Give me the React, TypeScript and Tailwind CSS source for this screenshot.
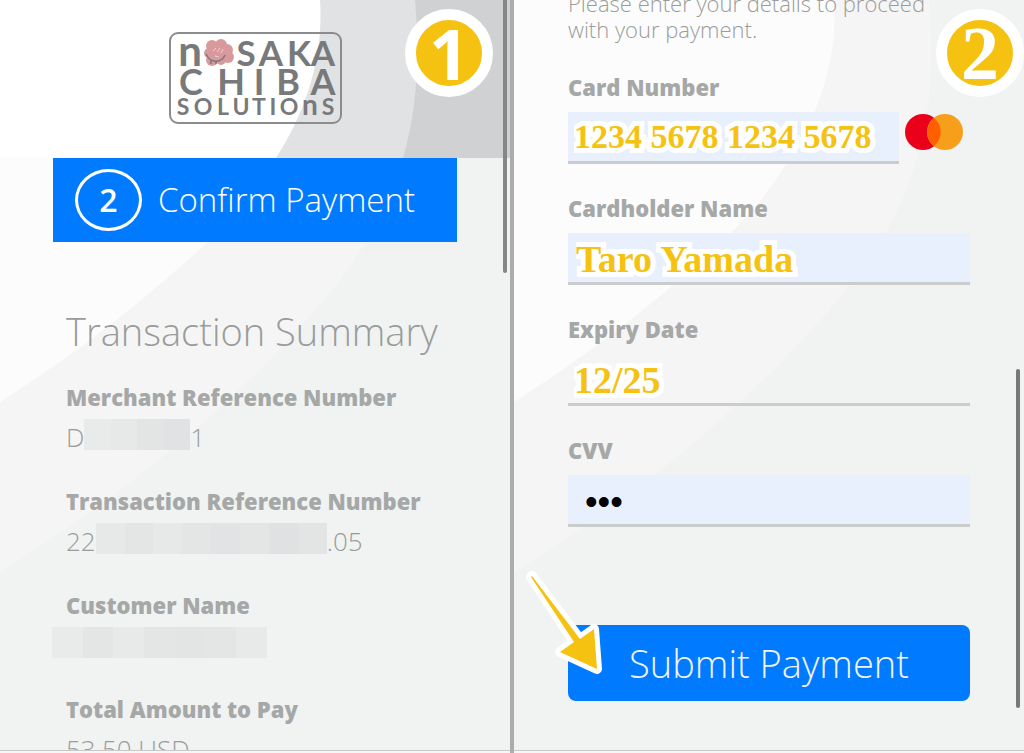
import React from "react";

const YELLOW_TEXT =
  "text-[#f5c211] [-webkit-text-stroke:10px_white] [paint-order:stroke_fill] [stroke-linejoin:round]";

const LOGO_LETTERS = [
  { char: "n", x: 190, y: 66, size: 42 },
  { char: "S", x: 246, y: 66, size: 35 },
  { char: "A", x: 271, y: 66, size: 35 },
  { char: "K", x: 299, y: 66, size: 35 },
  { char: "A", x: 323, y: 66, size: 35 },
  { char: "C", x: 191, y: 95, size: 36 },
  { char: "H", x: 231, y: 95, size: 36 },
  { char: "I", x: 259, y: 95, size: 36 },
  { char: "B", x: 288, y: 95, size: 36 },
  { char: "A", x: 323, y: 95, size: 36 },
  { char: "S", x: 183, y: 115, size: 23 },
  { char: "O", x: 203, y: 115, size: 23 },
  { char: "L", x: 223, y: 115, size: 23 },
  { char: "U", x: 241, y: 115, size: 23 },
  { char: "T", x: 259, y: 115, size: 23 },
  { char: "I", x: 273, y: 115, size: 23 },
  { char: "O", x: 289, y: 115, size: 23 },
  { char: "n", x: 310, y: 115, size: 28 },
  { char: "S", x: 328, y: 115, size: 23 },
];

const Curves: React.FC<{ outer: string; inner: string }> = ({ outer, inner }) => (
  <svg
    className="absolute left-0 top-0 -z-10"
    width="510"
    height="600"
    viewBox="0 0 510 600"
    aria-hidden="true"
  >
    <path
      fill={outer}
      d="M0 0H415C420 60 417 110 403 158C390 205 365 250 332 290C250 390 140 485 0 572Z"
    />
    <path
      fill={inner}
      d="M0 0H320C324 60 304 115 276 158C250 200 225 228 190 258C130 312 70 357 0 402Z"
    />
  </svg>
);

const StepBadge: React.FC<{ children: React.ReactNode; className: string }> = ({
  children,
  className,
}) => (
  <div
    className={`absolute top-[9px] flex size-[88px] items-center justify-center rounded-full border-[11px] border-white bg-[#f5c211] font-bold leading-none text-white ${className}`}
  >
    {children}
  </div>
);

const Logo: React.FC = () => (
  <svg width="174" height="93" viewBox="168 32 174 93" role="img" aria-label="Nosaka Chiba Solutions">
    <rect x="170" y="33" width="171" height="90" rx="8" fill="none" stroke="#8b8c8e" strokeWidth="2" />
    <g fill="#77797b" fontFamily="Lato, sans-serif" fontWeight="700" textAnchor="middle">
      {LOGO_LETTERS.map((l) => (
        <text key={`${l.x}-${l.y}`} x={l.x} y={l.y} fontSize={l.size}>
          {l.char}
        </text>
      ))}
    </g>
    <g fill="#d99a9e">
      <circle cx="212" cy="46" r="6" />
      <circle cx="221" cy="45" r="6" />
      <circle cx="227" cy="50" r="6" />
      <circle cx="228" cy="57" r="6" />
      <circle cx="221" cy="60" r="5" />
      <circle cx="212" cy="60" r="6" />
      <circle cx="209" cy="53" r="5" />
      <circle cx="218" cy="53" r="9" />
    </g>
    <path
      d="M206 54c4 9 15 10 19 1M211 60v4M216 61v3"
      fill="none"
      stroke="#77797b"
      strokeWidth="1.5"
    />
    <path
      d="M213 51l3-3M217 52l3-4M221 53l2-4M215 56l4 1"
      fill="none"
      stroke="#ecd3d5"
      strokeWidth="1"
    />
  </svg>
);

const Mosaic: React.FC<{ tiles: string[]; className: string }> = ({ tiles, className }) => (
  <span className={`flex h-[31px] ${className}`}>
    {tiles.map((tile, i) => (
      <span key={i} className={`flex-1 ${tile}`} />
    ))}
  </span>
);

const SummaryItem: React.FC<{ label: string; children: React.ReactNode }> = ({
  label,
  children,
}) => (
  <div className="h-[104px] shrink-0">
    <dt className="text-[22px] font-extrabold leading-[28px]">{label}</dt>
    <dd className="mt-2 flex h-[31px] text-[26px] font-light leading-[36px] text-[#999c9b]">
      {children}
    </dd>
  </div>
);

const Summary: React.FC = () => (
  <section className="relative isolate flex min-w-0 flex-col overflow-hidden bg-[#f0f3f2]">
    <Curves outer="#f5f5f5" inner="#fcfcfc" />
    <header className="relative isolate flex h-[158px] shrink-0 justify-center overflow-hidden bg-[#d0d1d3] pt-8">
      <Curves outer="#e1e2e4" inner="#ffffff" />
      <Logo />
    </header>
    <div className="mx-[53px] flex h-[84px] shrink-0 items-center gap-4 bg-[#007bff] pl-[22px] text-white">
      <span className="flex h-[62px] w-[67px] items-center justify-center rounded-[50%] border-[3px] border-white text-[32px] font-semibold">
        2
      </span>
      <span className="whitespace-nowrap text-[33px] font-light">Confirm Payment</span>
    </div>
    <div className="px-[66px] pt-[65px]">
      <h1 className="whitespace-nowrap text-[38px] font-light leading-[48px] text-[#999c9b]">
        Transaction Summary
      </h1>
      <dl className="mt-7 whitespace-nowrap">
        <SummaryItem label="Merchant Reference Number">
          D
          <Mosaic
            className="w-[106px]"
            tiles={["bg-[#e9ebea]", "bg-[#e7e9e8]", "bg-[#e3e4e4]", "bg-[#e1e2e3]"]}
          />
          1
        </SummaryItem>
        <SummaryItem label="Transaction Reference Number">
          22
          <Mosaic
            className="w-[231px]"
            tiles={[
              "bg-[#e7e9e8]",
              "bg-[#e4e6e5]",
              "bg-[#e7e9e8]",
              "bg-[#e4e5e5]",
              "bg-[#e2e3e4]",
              "bg-[#e4e5e5]",
              "bg-[#e0e1e3]",
              "bg-[#e3e4e4]",
            ]}
          />
          .05
        </SummaryItem>
        <SummaryItem label="Customer Name">
          <Mosaic
            className="-ml-[14px] w-[215px]"
            tiles={[
              "bg-[#e9ebea]",
              "bg-[#e4e6e5]",
              "bg-[#e8eae9]",
              "bg-[#e4e6e5]",
              "bg-[#e3e5e4]",
              "bg-[#e4e6e5]",
              "bg-[#e8eae9]",
            ]}
          />
        </SummaryItem>
        <SummaryItem label="Total Amount to Pay">53.50 USD</SummaryItem>
      </dl>
    </div>
    <div className="absolute inset-x-0 bottom-0 h-[3px] border-t border-[#c9c9c9] bg-[#f6f6f6]" />
    <div className="absolute right-[3px] top-0 h-[273px] w-1 rounded-b-full bg-[#858687]" />
    <StepBadge className="right-[17px] font-['Open_Sans',sans-serif] text-[70px]">1</StepBadge>
  </section>
);

type FieldProps = {
  id: string;
  label: string;
  value: string;
  type?: string;
  className: string;
  children?: React.ReactNode;
};

const Field: React.FC<FieldProps> = ({ id, label, value, type = "text", className, children }) => (
  <div>
    <label htmlFor={id} className="block text-[22px] font-extrabold leading-[24px]">
      {label}
    </label>
    <div className="mt-[13px] flex gap-[6px]">
      <input
        id={id}
        type={type}
        defaultValue={value}
        className={`h-[52px] w-full min-w-0 flex-1 rounded-none border-b-[3px] border-[#cbcccc] outline-none ${className}`}
      />
      {children}
    </div>
  </div>
);

const CardMark: React.FC = () => (
  <svg className="mr-[7px] mt-px shrink-0" width="58" height="38" viewBox="0 0 58 38" role="img" aria-label="Mastercard">
    <circle cx="18" cy="19" r="18" fill="#eb001b" />
    <circle cx="40" cy="19" r="18" fill="#f79e1b" />
    <path d="M29 5a18 18 0 0 1 0 28a18 18 0 0 1 0-28z" fill="#ff5f00" />
  </svg>
);

const PaymentForm: React.FC = () => (
  <section className="relative isolate flex min-w-0 flex-col justify-end overflow-hidden bg-[#f0f3f2] px-[54px] pb-[52px]">
    <Curves outer="#f5f5f5" inner="#fcfcfc" />
    <form className="flex flex-col gap-8" onSubmit={(e) => e.preventDefault()}>
      <p className="pb-px text-[22px] font-light leading-[26px] text-[#999c9b]">
        Please enter your details to proceed with your payment.
      </p>
      <Field
        id="card-number"
        label="Card Number"
        value="1234 5678 1234 5678"
        className={`bg-[#e8effd] pl-[6px] font-['Liberation_Serif',serif] text-[34px] font-bold ${YELLOW_TEXT}`}
      >
        <CardMark />
      </Field>
      <Field
        id="cardholder"
        label="Cardholder Name"
        value="Taro Yamada"
        className={`bg-[#e8effd] pl-2 pt-1 font-['Liberation_Serif',serif] text-[38px] font-bold ${YELLOW_TEXT}`}
      />
      <Field
        id="expiry"
        label="Expiry Date"
        value="12/25"
        className={`bg-transparent pl-[6px] pt-1 font-['Liberation_Serif',serif] text-[38px] font-bold ${YELLOW_TEXT}`}
      />
      <Field
        id="cvv"
        label="CVV"
        type="password"
        value="123"
        className="bg-[#e8effd] pl-[17px] pt-1 font-['Liberation_Sans',sans-serif] text-[36px] text-black"
      />
      <div className="relative mt-[66px]">
        <button
          type="submit"
          className="h-[76px] w-full rounded-lg bg-[#007bff] text-[38px] font-light text-[#f0f3f2]"
        >
          Submit Payment
        </button>
        <svg
          className="pointer-events-none absolute -left-[44px] -top-[56px]"
          width="82"
          height="110"
          viewBox="0 0 82 110"
          aria-hidden="true"
        >
          <path
            d="M7 8L50 73L36 83L73 100L70 60L56 70L8 7Z"
            fill="#f5c211"
            stroke="white"
            strokeWidth="10"
            strokeLinejoin="round"
            paintOrder="stroke"
          />
        </svg>
      </div>
    </form>
    <div className="absolute inset-x-0 bottom-0 h-[3px] border-t border-[#c9c9c9] bg-[#f6f6f6]" />
    <div className="absolute right-1 top-[369px] h-[339px] w-1 rounded-full bg-[#777878]" />
    <StepBadge className="right-0 font-['Liberation_Serif',serif] text-[76px]">2</StepBadge>
  </section>
);

export default function App() {
  return (
    <main className="grid h-screen grid-cols-[1fr_4px_1fr] overflow-hidden font-['Open_Sans',sans-serif] text-[#a5a8a7]">
      <Summary />
      <div className="bg-[#acacac]" />
      <PaymentForm />
    </main>
  );
}
